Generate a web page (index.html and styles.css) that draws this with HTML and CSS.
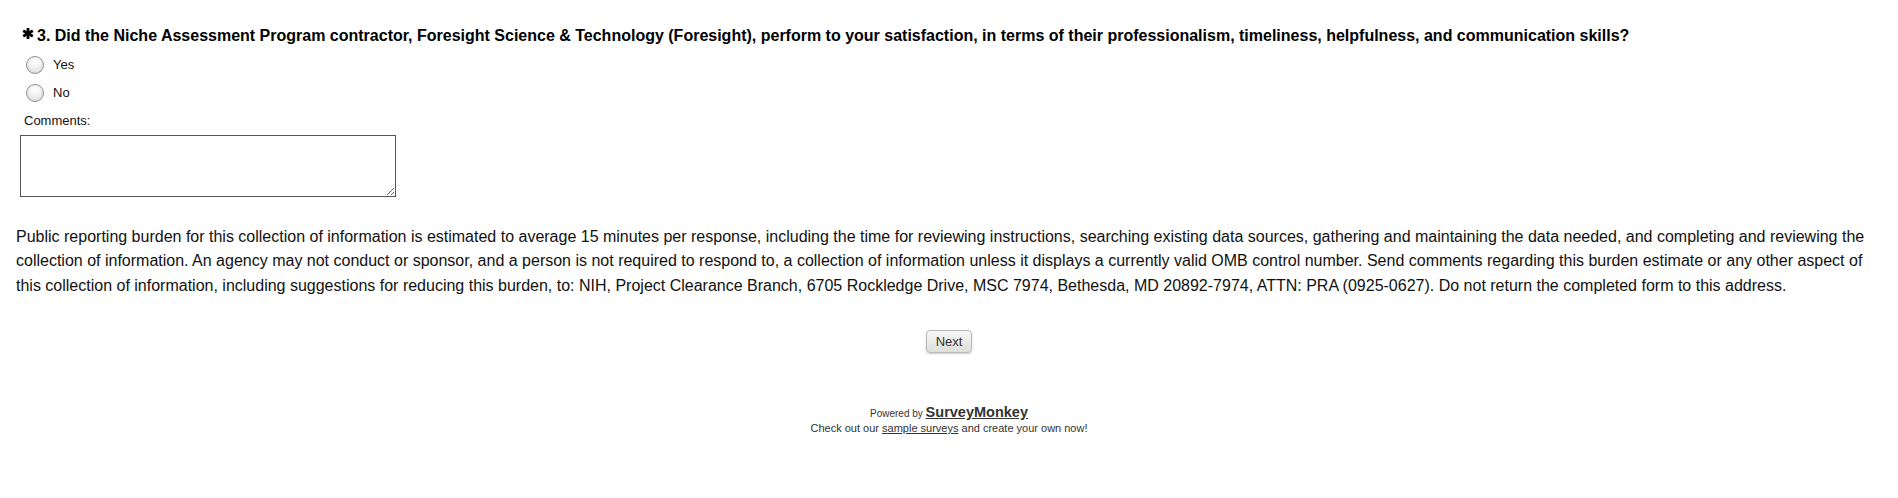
FILE: index.html
```html
<!DOCTYPE html>
<html>
<head>
<meta charset="utf-8" />
<title>Survey</title>
<link rel="stylesheet" href="styles.css">
</head>
<body>
	<div class="page">
		<div class="question">
			<h3 class="q-title"><span class="req"><svg width="12" height="11" viewBox="0 0 12 11"><g stroke="#000" stroke-width="2.8" stroke-linecap="butt"><line x1="6" y1="0" x2="6" y2="11"/><line x1="1.2" y1="2.75" x2="10.8" y2="8.25"/><line x1="1.2" y1="8.25" x2="10.8" y2="2.75"/></g></svg></span>3. Did the Niche Assessment Program contractor, Foresight Science &amp; Technology (Foresight), perform to your satisfaction, in terms of their professionalism, timeliness, helpfulness, and communication skills?</h3>
			<ul class="answers">
				<li><label><input type="radio" name="q3" /><span>Yes</span></label></li>
				<li><label><input type="radio" name="q3" /><span>No</span></label></li>
			</ul>
			<div class="comment-label">Comments:</div>
			<textarea class="comment-box"></textarea>
		</div>
		<p class="burden">Public reporting burden for this collection of information is estimated to average 15 minutes per response, including the time for reviewing instructions, searching existing data sources, gathering and maintaining the data needed, and completing and reviewing the collection of information. An agency may not conduct or sponsor, and a person is not required to respond to, a collection of information unless it displays a currently valid OMB control number. Send comments regarding this burden estimate or any other aspect of this collection of information, including suggestions for reducing this burden, to: NIH, Project Clearance Branch, 6705 Rockledge Drive, MSC 7974, Bethesda, MD 20892-7974, ATTN: PRA (0925-0627). Do not return the completed form to this address.</p>
		<div class="nav">
			<button class="btn-next" type="button">Next</button>
		</div>
		<div class="footer">
			<div class="powered">Powered by <a href="#">SurveyMonkey</a></div>
			<div class="checkout">Check out our <a href="#">sample surveys</a> and create your own now!</div>
		</div>
	</div>
</body>
</html>
```
FILE: styles.css
```css
*{
	margin:0;
	padding:0;
	list-style:none;
}
body{
	background:#fff;
	font-family:"Liberation Sans", Arial, sans-serif;
	color:#000;
}
.page{
	padding:26px 0 0 0;
}
.question{
	padding-left:20px;
}
.q-title{
	font-size:16px;
	line-height:20px;
	font-weight:bold;
	color:#000;
	margin-left:2px;
}
.req{
	display:inline-block;
	width:15px;
	vertical-align:top;
	padding-top:2px;
}
.req svg{
	display:block;
}
.answers{
	padding-top:4.5px;
	margin-left:6px;
}
.answers li{
	height:28px;
	display:flex;
	align-items:center;
}
.answers label{
	display:flex;
	align-items:center;
	font-size:13px;
	color:#111;
}
.answers input{
	appearance:none;
	-webkit-appearance:none;
	width:18px;
	height:18px;
	border-radius:50%;
	border:1px solid #8f8f8f;
	background:radial-gradient(circle at 50% 30%, #ffffff 0%, #f2f2f2 40%, #d4d4d4 100%);
	margin:0 9px 0 0;
}
.comment-label{
	font-size:13px;
	line-height:16px;
	margin:6px 0 0 4px;
	color:#111;
}
.comment-box{
	display:block;
	box-sizing:border-box;
	width:376px;
	height:62px;
	border:1px solid #555;
	margin-top:6.5px;
	resize:both;
	font-family:inherit;
}
.burden{
	font-size:16px;
	line-height:24.5px;
	color:#111;
	margin:27.5px 16px 0 16px;
}
.nav{
	display:flex;
	justify-content:center;
	margin-top:32px;
}
.btn-next{
	width:46px;
	height:23px;
	font-family:inherit;
	font-size:13px;
	color:#333;
	border:1px solid #b8b8b8;
	border-radius:4px;
	background:linear-gradient(#f7f7f5, #dededb);
	box-shadow:0 1px 2px rgba(0,0,0,0.2);
}
.footer{
	margin-top:51px;
	text-align:center;
	color:#333;
}
.powered{
	font-size:10px;
	line-height:16px;
}
.powered a{
	font-size:14.5px;
	font-weight:bold;
	color:#333;
	text-decoration:underline;
}
.checkout{
	font-size:11px;
	line-height:13px;
}
.checkout a{
	color:#333;
	text-decoration:underline;
}
```
